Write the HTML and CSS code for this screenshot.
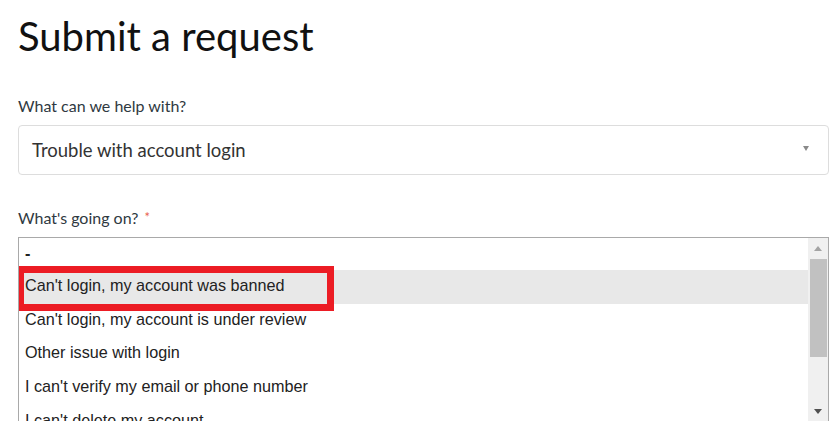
FILE: index.html
```html
<!DOCTYPE html>
<html lang="en">
<head>
<meta charset="utf-8">
<title>Submit a request</title>
<link rel="stylesheet" href="styles.css">
</head>
<body>
<main class="page">
  <h1 class="title">Submit a request</h1>

  <div class="field">
    <label class="label">What can we help with?</label>
    <div class="select">
      <span class="select-value">Trouble with account login</span>
      <span class="select-arrow"></span>
    </div>
  </div>

  <div class="field field-second">
    <label class="label">What's going on? <span class="required">*</span></label>
    <div class="listbox">
      <div class="options">
        <div class="option option-first">-</div>
        <div class="option option-hover">Can't login, my account was banned<span class="callout"></span></div>
        <div class="option">Can't login, my account is under review</div>
        <div class="option">Other issue with login</div>
        <div class="option">I can't verify my email or phone number</div>
        <div class="option">I can't delete my account</div>
      </div>
      <div class="scrollbar">
        <div class="sb-btn"><span class="sb-up"></span></div>
        <div class="sb-thumb"></div>
        <div class="sb-track"></div>
        <div class="sb-btn"><span class="sb-down"></span></div>
      </div>
    </div>
  </div>
</main>
</body>
</html>
```

FILE: styles.css
```css
html, body {
  margin: 0;
  padding: 0;
  background: #ffffff;
  overflow: hidden;
}

.page {
  padding: 12px 2px 0 18px;
  font-family: "Lato", "Open Sans", sans-serif;
  color: #2f3941;
}

.title {
  margin: 0;
  font-size: 40px;
  line-height: 48px;
  font-weight: 400;
  color: #111111;
}

.field {
  margin-top: 36px;
  display: flex;
  flex-direction: column;
}

.field-second {
  margin-top: 32px;
}

.label {
  font-size: 16px;
  line-height: 20px;
  color: #2f3941;
}

.required {
  color: #e8604c;
  font-size: 13px;
  margin-left: 2px;
  vertical-align: 2px;
}

.select {
  margin-top: 9px;
  box-sizing: border-box;
  height: 50px;
  border: 1px solid #dddddd;
  border-radius: 4px;
  display: flex;
  align-items: center;
  justify-content: space-between;
  padding: 0 19px 0 13px;
}

.select-value {
  font-size: 18.5px;
  color: #333333;
}

.select-arrow {
  width: 0;
  height: 0;
  border-left: 3px solid transparent;
  border-right: 3px solid transparent;
  border-top: 5px solid #8a8a8a;
  margin-top: -4px;
}

.listbox {
  margin-top: 9px;
  box-sizing: border-box;
  height: 186px;
  border: 1px solid #a9a9a9;
  display: flex;
  background: #ffffff;
}

.options {
  flex: 1;
  overflow: hidden;
  font-family: "Liberation Sans", Arial, sans-serif;
  font-size: 16.2px;
  color: #222222;
}

.option {
  position: relative;
  height: 33.67px;
  line-height: 31px;
  padding-left: 6px;
  white-space: nowrap;
}

.option-first {
  height: 32px;
  font-weight: 700;
}

.option-hover {
  background: #e8e8e8;
}

.callout {
  position: absolute;
  left: -2px;
  top: -4px;
  width: 317px;
  height: 45px;
  box-sizing: border-box;
  border: 7px solid #ec1c24;
}

.scrollbar {
  width: 20px;
  background: #f0f0f0;
  display: flex;
  flex-direction: column;
}

.sb-btn {
  height: 21px;
  display: flex;
  align-items: center;
  justify-content: center;
  flex-shrink: 0;
}

.sb-up {
  width: 0;
  height: 0;
  border-left: 4px solid transparent;
  border-right: 4px solid transparent;
  border-bottom: 5px solid #a3a3a3;
}

.sb-down {
  width: 0;
  height: 0;
  border-left: 4px solid transparent;
  border-right: 4px solid transparent;
  border-top: 5px solid #505050;
}

.sb-thumb {
  height: 98px;
  margin: 0 1px 0 2px;
  background: #c1c1c1;
  flex-shrink: 0;
}

.sb-track {
  flex: 1;
}
```
